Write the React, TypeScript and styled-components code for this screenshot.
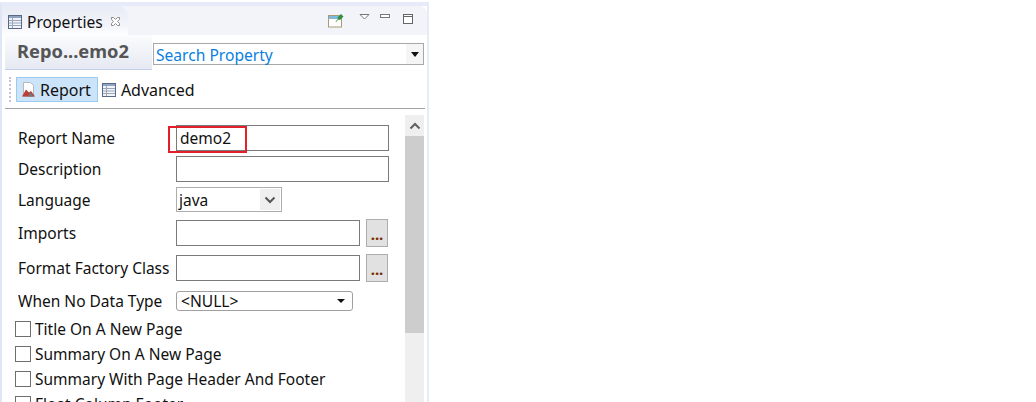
import React from "react";
import styled, { createGlobalStyle } from "styled-components";

const Global = createGlobalStyle`
  html, body { margin: 0; padding: 0; background: #fff; overflow: hidden; }
  body { font-family: "Noto Sans", "Open Sans", sans-serif; color: #111; }
`;
const Page = styled.div`
  width: 1036px; height: 402px; overflow: hidden; background: #fff;
  padding-top: 2px; box-sizing: border-box;
`;
const Panel = styled.div`
  width: 429px; height: 400px; box-sizing: border-box; overflow: hidden;
  border-top: 4px solid #e7eaf8; border-left: 2px solid #dfe6f6; border-right: 2px solid #e6ebf8;
  display: flex; flex-direction: column; background: #fff;
`;
const TabBar = styled.div`
  height: 29px; flex: none; display: flex; justify-content: space-between; background: #f3f4fa;
  border-radius: 0 8px 0 0;
`;
const Tab = styled.div`
  width: 126px; height: 29px; box-sizing: border-box; padding: 2px 0 0 6px; display: flex; align-items: center;
  background: linear-gradient(#e9ebf5, #f4f5fb 70%, #fff); border-radius: 0 10px 0 0;
  font-size: 15.6px; gap: 5px;
`;
const CloseMark = styled.svg`width: 11px; height: 11px; margin-left: 2px;`;
const ViewTools = styled.div`display: flex; align-items: flex-start; padding: 7px 13px 0 0;`;
const Icon = styled.svg<{ $ml?: number; $mt?: number }>`
  flex: none; display: block; margin-left: ${p => p.$ml ?? 0}px; margin-top: ${p => p.$mt ?? 0}px;
`;
const TitleRow = styled.div`height: 35px; flex: none; display: flex; padding-left: 3px; padding-right: 2px;`;
const Title = styled.div`
  width: 147px; height: 35px; box-sizing: border-box; border-bottom: 1px solid #c4d0ea;
  background: linear-gradient(#fbfcfe, #e6e9f2); color: #555; font-weight: 700; font-size: 18.3px;
  display: flex; align-items: center; padding: 0 0 4px 12px; white-space: nowrap;
`;
const Search = styled.div`
  width: 271px; height: 22px; margin: 8px 0 0 1px; box-sizing: border-box; border: 1px solid #a8a8a8;
  display: flex; justify-content: space-between; align-items: center; color: #0a7fe0; font-size: 15.6px; padding: 0 0 0 2px;
  line-height: 22px;
`;
const SearchText = styled.span`padding-top: 2px;`;
const SmallArrow = styled.span`
  width: 17px; height: 20px; background: #f5f5f5; display: flex; align-items: center; justify-content: center;
  &::after { content: ""; border: 4px solid transparent; border-top: 5px solid #111; border-bottom: 0; }
`;
const Toolbar = styled.div`
  height: 39px; flex: none; margin: 0 2px 0 3px; box-sizing: border-box; border-bottom: 1px solid #a3a3a3;
  display: flex; align-items: flex-start; padding: 7px 0 0 4px; font-size: 16px;
`;
const Grip = styled.div`width: 0; height: 25px; margin-right: 5px; border-left: 2px dotted #c4c4c4;`;
const ToolButton = styled.div<{ $active?: boolean }>`
  height: 25px; box-sizing: border-box; display: flex; align-items: center;
  gap: ${p => (p.$active ? 4 : 5)}px; padding: 0 6px 0 ${p => (p.$active ? 4 : 2)}px;
  background: ${p => (p.$active ? "#cce4f9" : "transparent")};
  border: 1px solid ${p => (p.$active ? "#9ccbf0" : "transparent")};
  margin-right: 1px;
`;
const Body = styled.div`flex: 1; display: flex; position: relative; min-height: 0;`;
const Form = styled.div`width: 403px; flex: none; padding: 16px 0 0 16px; box-sizing: border-box; font-size: 15.5px;`;
const Row = styled.div<{ $h: number; $mb: number }>`
  display: flex; align-items: center; height: ${p => p.$h}px; margin-bottom: ${p => p.$mb}px;
`;
const Label = styled.div`width: 158px; flex: none; white-space: nowrap;`;
const Input = styled.div<{ $w: number }>`
  width: ${p => p.$w}px; height: 26px; box-sizing: border-box; border: 1px solid #7a7a7a; padding-left: 3px;
  line-height: 24px; background: #fff;
`;
const Dots = styled.div`
  width: 22px; height: 28px; box-sizing: border-box; margin-left: 6px; background: #e1e1e1; border: 1px solid #adadad;
  color: #7a2a00; font-size: 15px; font-weight: 700; display: flex; align-items: flex-end; justify-content: center;
  line-height: 20px; padding-bottom: 2px;
`;
const LangSelect = styled.div`
  width: 106px; height: 25px; box-sizing: border-box; border: 1px solid #adadad; padding-left: 2px;
  display: flex; justify-content: space-between; align-items: center;
`;
const Chevron = styled.span`
  width: 20px; height: 21px; margin-right: 1px; background: #efefef; display: flex; align-items: center; justify-content: center;
`;
const NullSelect = styled.div`
  width: 177px; height: 20px; box-sizing: border-box; border: 1px solid #a0a0a0; border-radius: 3px; padding: 0 4px;
  display: flex; justify-content: space-between; align-items: center; font-size: 15.6px;
  &::after { content: ""; border: 4px solid transparent; border-top: 4px solid #111; border-bottom: 0; margin-right: 3px; }
`;
const Check = styled.div`
  display: flex; align-items: center; height: 25px; margin-left: -3px; gap: 4px; white-space: nowrap;
`;
const Box = styled.span`width: 16px; height: 16px; box-sizing: border-box; border: 1px solid #6f6f6f; background: #fff; flex: none;`;
const Scrollbar = styled.div`
  width: 19px; margin-top: 6px; flex: none; background: #efefef; display: flex; flex-direction: column;
`;
const ScrollUp = styled.div`height: 21px; display: flex; align-items: center; justify-content: center;`;
const Thumb = styled.div`height: 197px; background: #cdcdcd;`;
const RedMark = styled.div`
  position: absolute; left: 166px; top: 17px; width: 79px; height: 27px; box-sizing: border-box;
  border: 2px solid #e2202c; pointer-events: none;
`;

const TableIcon = () => (
  <Icon width="14" height="14" viewBox="0 0 14 14">
    <rect x="0.5" y="0.5" width="13" height="13" fill="#f2f4fa" stroke="#5a6a86" />
    <rect x="1" y="1" width="12" height="2" fill="#8fa3c4" />
    <path d="M1 5.5h12M1 8h12M1 10.5h12M4.5 3v10" stroke="#9aa6ba" fill="none" />
  </Icon>
);
const ReportIcon = () => (
  <Icon width="15" height="17" viewBox="0 0 15 17">
    <path d="M2.5 1.5h7l3 3v11h-10z" fill="#fff" stroke="#b9b9b9" />
    <path d="M1 15.5l4-7 3 3 2-1.5 4 5.5z" fill="#b5403c" />
    <path d="M7 15.5l2.5-4 3 4z" fill="#777" />
  </Icon>
);

export default function App() {
  return (
    <Page>
      <Global />
      <Panel>
        <TabBar>
          <Tab>
            <TableIcon />
            Properties
            <CloseMark viewBox="0 0 11 11">
              <path d="M1.5 1.5h2l2 2 2-2h2v2l-2 2 2 2v2h-2l-2-2-2 2h-2v-2l2-2-2-2z" fill="#fff" stroke="#8a8a8a" />
            </CloseMark>
          </Tab>
          <ViewTools>
            <Icon width="16" height="15" viewBox="0 0 16 15">
              <rect x="0.5" y="2.5" width="13" height="11.5" fill="#fff" stroke="#a89a74" />
              <rect x="1" y="3" width="12" height="3" fill="#7fb9dd" />
              <path d="M7.5 8.5l2.5-2.5-.5-1.5 3.5-3.5 2.5 2.5-3.5 3.5-1.5-.5-2.5 2.5z" fill="#2f8f3d" />
            </Icon>
            <Icon width="12" height="8" viewBox="0 0 12 8" $ml={15}>
              <path d="M1 1.5h9L5.5 6z" fill="#fff" stroke="#777" />
            </Icon>
            <Icon width="11" height="6" viewBox="0 0 11 6" $ml={9}>
              <rect x="0.5" y="1.5" width="9" height="3" fill="#fff" stroke="#777" />
            </Icon>
            <Icon width="11" height="11" viewBox="0 0 11 11" $ml={12} $mt={1}>
              <rect x="0.5" y="0.5" width="9" height="9" fill="#fff" stroke="#666" />
              <path d="M1 2.5h8" stroke="#666" />
            </Icon>
          </ViewTools>
        </TabBar>
        <TitleRow>
          <Title>Repo...emo2</Title>
          <Search>
            <SearchText>Search Property</SearchText>
            <SmallArrow />
          </Search>
        </TitleRow>
        <Toolbar>
          <Grip />
          <ToolButton $active>
            <ReportIcon />
            Report
          </ToolButton>
          <ToolButton>
            <TableIcon />
            Advanced
          </ToolButton>
        </Toolbar>
        <Body>
          <Form>
            <Row $h={26} $mb={5}>
              <Label>Report Name</Label>
              <Input $w={213}>demo2</Input>
            </Row>
            <Row $h={26} $mb={5}>
              <Label>Description</Label>
              <Input $w={213} />
            </Row>
            <Row $h={25} $mb={7}>
              <Label>Language</Label>
              <LangSelect>
                java
                <Chevron>
                  <Icon width="12" height="8" viewBox="0 0 12 8">
                    <path d="M1.5 1.5L6 6l4.5-4.5" fill="none" stroke="#555" strokeWidth="2" />
                  </Icon>
                </Chevron>
              </LangSelect>
            </Row>
            <Row $h={28} $mb={7}>
              <Label>Imports</Label>
              <Input $w={184} />
              <Dots>...</Dots>
            </Row>
            <Row $h={28} $mb={9}>
              <Label>Format Factory Class</Label>
              <Input $w={184} />
              <Dots>...</Dots>
            </Row>
            <Row $h={20} $mb={5}>
              <Label>When No Data Type</Label>
              <NullSelect>&lt;NULL&gt;</NullSelect>
            </Row>
            <Check><Box />Title On A New Page</Check>
            <Check><Box />Summary On A New Page</Check>
            <Check><Box />Summary With Page Header And Footer</Check>
            <Check><Box />Float Column Footer</Check>
          </Form>
          <Scrollbar>
            <ScrollUp>
              <Icon width="12" height="8" viewBox="0 0 12 8">
                <path d="M1.5 6.5L6 2l4.5 4.5" fill="none" stroke="#606060" strokeWidth="2" />
              </Icon>
            </ScrollUp>
            <Thumb />
          </Scrollbar>
          <RedMark />
        </Body>
      </Panel>
    </Page>
  );
}
